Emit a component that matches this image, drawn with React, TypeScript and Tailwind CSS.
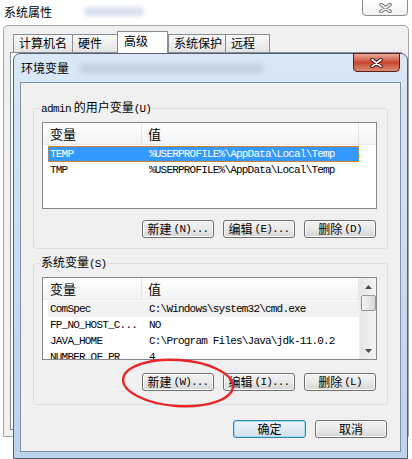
import React from 'react';

const MONO = "font-['Liberation_Mono','Noto_Sans_CJK_SC',monospace]";

interface XProps {
  dark: string;
  light: string;
}

// Aero style close cross: thick dark stroke under a thin light one
const CloseCross = ({ dark, light }: XProps) => (
  <svg width="13" height="10" viewBox="0 0 13 10">
    <path d="M2 1.5 L11 8.5 M11 1.5 L2 8.5" stroke={dark} strokeWidth="3.6" strokeLinecap="round" />
    <path d="M2 1.5 L11 8.5 M11 1.5 L2 8.5" stroke={light} strokeWidth="1.6" strokeLinecap="round" />
  </svg>
);

interface BtnProps {
  label: string;
  hot?: string;
  dots?: boolean;
  primary?: boolean;
}

const WinButton = ({ label, hot, dots = true, primary = false }: BtnProps) => (
  <div
    className={
      primary
        ? 'w-[73px] h-[18px] flex items-center justify-center rounded-[3px] border border-[#3c7fb1] shadow-[inset_0_0_0_1px_#9fdcf5] bg-linear-to-b from-[#eef4f9] to-[#d3e0ea]'
        : 'w-[72px] h-[18px] flex items-center justify-center rounded-[3px] border border-[#707070] shadow-[inset_0_0_0_1px_#fbfbfb] bg-linear-to-b from-[#f2f2f2] via-[#e9e9e9] to-[#d5d5d5]'
    }
  >
    <span className="text-[12px] leading-[14px]">{label}</span>
    {hot && (
      <span className={MONO + ' text-[11px] leading-[14px] tracking-[-0.8px] ml-[2px]'}>
        ({hot}){dots ? '...' : ''}
      </span>
    )}
  </div>
);

interface VarListProps {
  rows: string[][];
  selected?: number;
  hover?: number;
  scroll?: boolean;
  height: string;
}

const VarList = ({ rows, selected, hover, scroll = false, height }: VarListProps) => {
  const body = (
    <div className="flex-1 flex flex-col">
      <div className="flex h-[22px] shrink-0 bg-linear-to-b from-white to-[#f2f3f4] border-b border-[#eaeaea]">
        <div className="w-[99px] pl-[7px] flex items-center border-r border-[#e3e5e8] text-[13px]">变量</div>
        <div className="w-[217px] pl-[6px] flex items-center border-r border-[#e3e5e8] text-[13px]">值</div>
        <div className="flex-1" />
      </div>
      <div className="pt-[1px]">
        {rows.map((row, i) => (
          <div
            key={i}
            className={
              i === selected
                ? 'flex items-center h-[16px] ml-[5px] w-[311px] bg-[#3399ff] text-white outline outline-1 outline-dotted outline-[#e0892d] -outline-offset-1'
                : i === hover
                ? 'flex items-center h-[16px] ml-[5px] w-[311px] bg-[#f2f2f2]'
                : 'flex items-center h-[16px] ml-[5px] w-[311px]'
            }
          >
            <div className={MONO + ' w-[94px] pl-[2px] text-[11px] tracking-[-0.8px] whitespace-nowrap'}>{row[0]}</div>
            <div className={MONO + ' pl-[7px] text-[11px] tracking-[-0.8px] whitespace-nowrap'}>{row[1]}</div>
          </div>
        ))}
      </div>
    </div>
  );

  return (
    <div className={'flex border border-[#828790] bg-white overflow-hidden ' + height}>
      {body}
      {scroll && (
        <div className="w-[17px] flex flex-col items-center bg-linear-to-r from-[#e6e6e6] to-[#f4f4f4] border-l border-[#ececec]">
          <div className="h-[17px] flex items-center justify-center">
            <svg width="7" height="4" viewBox="0 0 7 4">
              <path d="M0 4 L3.5 0 L7 4 Z" fill="#4a4a4a" />
            </svg>
          </div>
          <div className="w-[15px] h-[16px] rounded-[2px] border border-[#979797] bg-linear-to-r from-[#f6f6f6] to-[#d6d6d6]" />
          <div className="flex-1" />
          <div className="h-[17px] flex items-center justify-center">
            <svg width="7" height="4" viewBox="0 0 7 4">
              <path d="M0 0 L7 0 L3.5 4 Z" fill="#4a4a4a" />
            </svg>
          </div>
        </div>
      )}
    </div>
  );
};

const tabs = ['计算机名', '硬件', '高级', '系统保护', '远程'];
const tabWidths = ['w-[60px]', 'w-[46px]', 'w-[51px]', 'w-[58px]', 'w-[45px]'];

const App = () => {
  const userVars = [
    ['TEMP', '%USERPROFILE%\\AppData\\Local\\Temp'],
    ['TMP', '%USERPROFILE%\\AppData\\Local\\Temp'],
  ];
  const sysVars = [
    ['ComSpec', 'C:\\Windows\\system32\\cmd.exe'],
    ['FP_NO_HOST_C...', 'NO'],
    ['JAVA_HOME', 'C:\\Program Files\\Java\\jdk-11.0.2'],
    ['NUMBER_OF_PR', '4'],
  ];

  return (
    <div className="relative w-[412px] h-[459px] bg-white overflow-hidden text-black font-['Noto_Sans_CJK_SC',sans-serif]">
      {/* 系统属性 dialog behind */}
      <div className="flex h-[25px]">
        <div className="pl-[4px] pt-[4px] text-[12px] leading-[16px]">系统属性</div>
        <div className="ml-[32px] mt-[7px] h-[9px] w-[60px] rounded-full bg-[#bccbe3] opacity-60 blur-[2px]" />
        <div className="ml-auto mr-[4px] -mt-[1px] w-[46px] h-[17px] flex items-center justify-center rounded-b-[4px] border border-[#8d8d8d] bg-linear-to-b from-white to-[#f1f1f1]">
          <CloseCross dark="#707070" light="#f4f4f4" />
        </div>
      </div>
      <div className="mx-[3px] h-[412px] border border-[#a6a6a6] rounded-t-[5px] bg-[#f0f0f0] px-[6px] pt-[7px]">
        <div className="flex items-end h-[19px] pl-[3px]">
          {tabs.map((t, i) =>
            i === 2 ? (
              <div
                key={t}
                className={tabWidths[i] + ' relative z-10 h-[22px] -mb-[1px] pl-[6px] pt-[1px] border border-b-0 border-[#898c95] bg-white text-[12px] leading-[16px]'}
              >
                {t}
              </div>
            ) : (
              <div
                key={t}
                className={tabWidths[i] + ' h-[18px] pl-[5px] border border-b-0 border-[#898c95] bg-linear-to-b from-[#fafafa] to-[#e3e3e3] text-[12px] leading-[16px] -mr-[1px]'}
              >
                {t}
              </div>
            )
          )}
        </div>
        <div className="h-[378px] border border-[#898c95] bg-white" />
      </div>

      {/* 环境变量 window */}
      <div className="absolute left-[13px] top-[53px] w-[395px] h-[406px] flex flex-col rounded-t-[7px] border border-[#56606b] bg-linear-to-b from-[#dae8f6] via-[#c9dcf1] to-[#bcd3ec]">
        <div className="relative h-[28px] flex items-center pl-[7px]">
          <span className="text-[12px] leading-[16px]">环境变量</span>
          <div className="ml-[10px] h-[9px] w-[185px] rounded-full bg-[#a9b6c4] opacity-50 blur-[3px]" />
          <div className="absolute right-[7px] -top-[1px] w-[47px] h-[19px] flex items-center justify-center rounded-b-[4px] border border-[#5c2119] bg-linear-to-b from-[#e9aa9b] via-[#c9452f] to-[#d88a72]">
            <CloseCross dark="#3d1510" light="#ffffff" />
          </div>
        </div>
        <div className="flex-1 mx-[6px] mb-[6px] border border-[#8191a5] bg-[#f0f0f0] px-[12px] pt-[16px]">
          <fieldset className="border border-[#d5dfe5] rounded-[3px] pl-[8px] pr-[10px] pb-[10px]">
            <legend className="-ml-[2px] px-[1px] text-[12px] leading-[16px]">
              <span className={MONO + ' text-[11px] tracking-[-0.6px]'}>admin</span> 的用户变量
              <span className={MONO + ' text-[11px] tracking-[-0.8px]'}>(U)</span>
            </legend>
            <div className="mt-[5px]">
              <VarList rows={userVars} selected={0} height="h-[87px]" />
            </div>
            <div className="flex justify-end gap-[9px] mt-[11px] pr-[1px]">
              <WinButton label="新建" hot="N" />
              <WinButton label="编辑" hot="E" />
              <WinButton label="删除" hot="D" dots={false} />
            </div>
          </fieldset>

          <fieldset className="mt-[5px] border border-[#d5dfe5] rounded-[3px] pl-[8px] pr-[10px] pb-[13px]">
            <legend className="-ml-[2px] px-[1px] text-[12px] leading-[16px]">
              系统变量<span className={MONO + ' text-[11px] tracking-[-0.8px]'}>(S)</span>
            </legend>
            <div className="mt-[5px]">
              <VarList rows={sysVars} hover={0} scroll height="h-[83px]" />
            </div>
            <div className="flex justify-end gap-[9px] mt-[13px] pr-[1px]">
              <WinButton label="新建" hot="W" />
              <WinButton label="编辑" hot="I" />
              <WinButton label="删除" hot="L" dots={false} />
            </div>
          </fieldset>

          <div className="flex justify-end gap-[9px] mt-[15px] pr-[1px]">
            <WinButton label="确定" primary />
            <WinButton label="取消" />
          </div>
        </div>
      </div>

      {/* red hand-drawn ellipse */}
      <svg className="absolute left-[118px] top-[355px]" width="122" height="58" viewBox="0 0 122 58">
        <ellipse cx="60" cy="28" rx="55" ry="23" fill="none" stroke="#e8262a" strokeWidth="2.4" transform="rotate(4 60 28)" />
      </svg>
    </div>
  );
};

export default App;
